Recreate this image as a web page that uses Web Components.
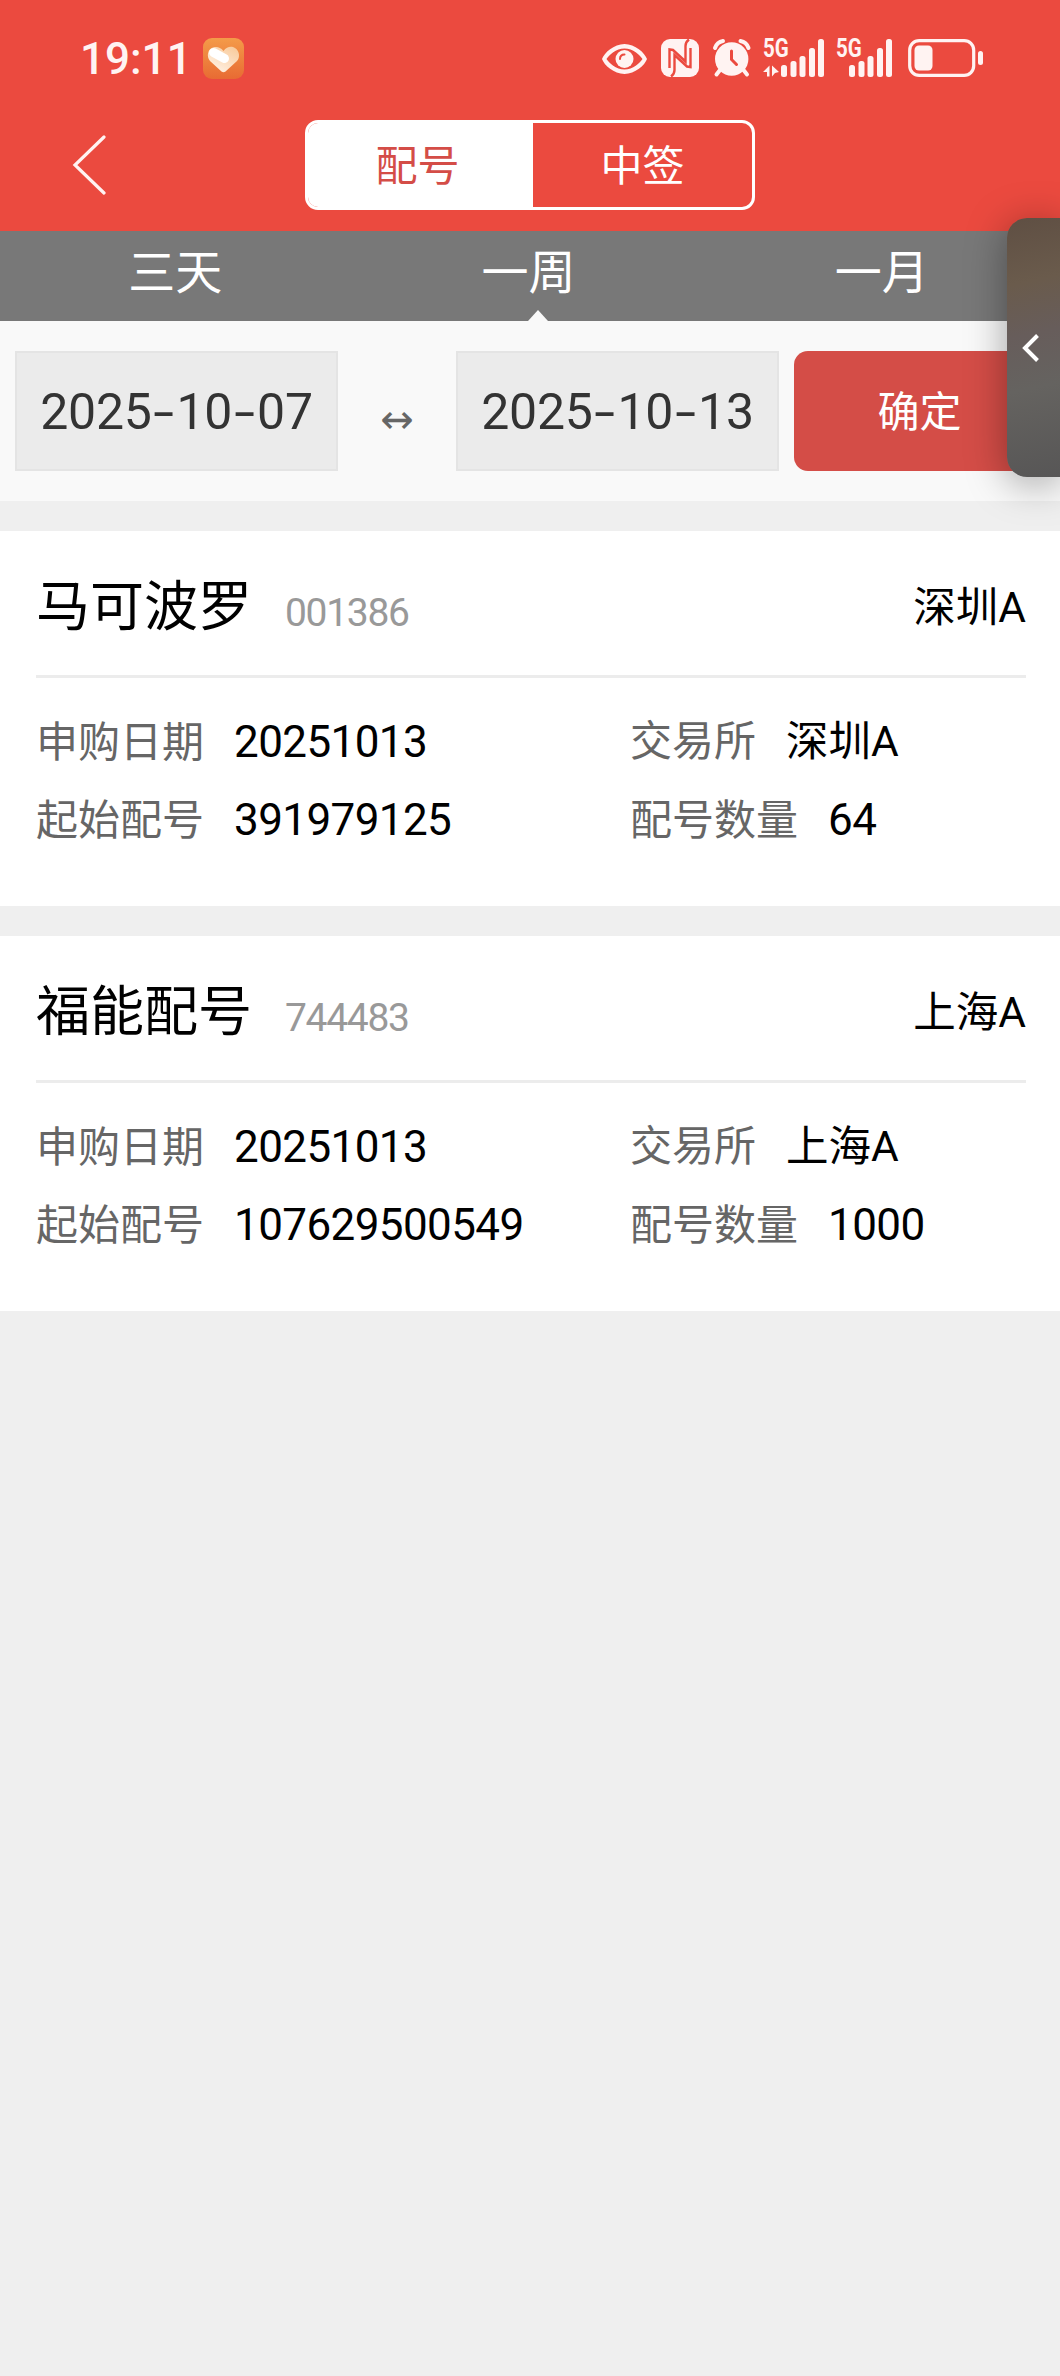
<!DOCTYPE html>
<html lang="zh-CN">
<head>
<meta charset="UTF-8">
<title>配号查询</title>
<style>
  body {
    margin: 0;
    background: #efefef;
    color: #000;
    font-family: Roboto, "Noto Sans CJK SC", sans-serif;
  }
</style>
</head>
<body>
<app-page>
  <status-bar time="19:11"></status-bar>
  <nav-bar>
    <segment-item active>配号</segment-item>
    <segment-item>中签</segment-item>
  </nav-bar>
  <range-tabs>
    <range-tab>三天</range-tab>
    <range-tab active>一周</range-tab>
    <range-tab>一月</range-tab>
  </range-tabs>
  <date-filter>
    <date-box value="2025-10-07"></date-box>
    <date-box slot="end" value="2025-10-13"></date-box>
  </date-filter>
  <stock-card name="马可波罗" code="001386" market="深圳A">
    <info-item label="申购日期" number>20251013</info-item>
    <info-item label="交易所">深圳A</info-item>
    <info-item label="起始配号" number>391979125</info-item>
    <info-item label="配号数量" number>64</info-item>
  </stock-card>
  <stock-card name="福能配号" code="744483" market="上海A">
    <info-item label="申购日期" number>20251013</info-item>
    <info-item label="交易所">上海A</info-item>
    <info-item label="起始配号" number>107629500549</info-item>
    <info-item label="配号数量" number>1000</info-item>
  </stock-card>
  <side-handle slot="overlay"></side-handle>
</app-page>

<script>
  class AppPage extends HTMLElement {
    constructor() {
      super();
      this.attachShadow({ mode: "open" }).innerHTML = `
        <style>
          :host { display: block; position: relative; width: 1060px; min-height: 2376px; overflow: hidden; }
          main { display: flex; flex-direction: column; }
        </style>
        <main><slot></slot></main>
        <slot name="overlay"></slot>
      `;
    }
  }

  class StatusBar extends HTMLElement {
    constructor() {
      super();
      this.attachShadow({ mode: "open" }).innerHTML = `
        <style>
          :host {
            display: flex; align-items: center; box-sizing: border-box; height: 99px;
            padding: 17px 77px 0 80px; background: #eb4a3f; color: #fff3f2;
          }
          .time { width: 123px; padding-top: 2px; font-size: 44px; font-weight: 500; line-height: 50px; white-space: nowrap; }
          .icons { display: flex; align-items: center; margin-left: auto; }
          svg { display: block; overflow: visible; }
          .icons svg { fill: currentColor; }
          .signal { position: relative; margin-right: 11px; }
          /* network type sits over the low bars */
          .signal span {
            position: absolute; left: 0; top: -5px; font-size: 25px; font-weight: 700; line-height: 30px;
            transform: scaleX(.82); transform-origin: 0 0;
          }
        </style>
        <span class="time">${this.getAttribute("time")}</span>
        <svg width="41" height="41" viewBox="0 0 41 41">
          <defs>
            <linearGradient id="tile" x2="0" y2="1"><stop stop-color="#f49b49"/><stop offset="1" stop-color="#e86b33"/></linearGradient>
            <linearGradient id="heart" x1="1" x2=".3" y2="1"><stop stop-color="#f8c896"/><stop offset="1" stop-color="#fff0e2"/></linearGradient>
          </defs>
          <rect width="41" height="41" rx="9" fill="url(#tile)"/>
          <path d="M20.500 13C24 8 29 8 32 10C37 13 37 20 34 23L22.500 33.500Q20.500 35 18.500 33.500L7 23C3 18 5 11 10 9.500C14 8.500 17 9 20.500 13Z" fill="url(#heart)"/>
          <path d="M10.500 14.500L21.500 20.500" stroke="#fff" stroke-width="9" stroke-linecap="round"/>
        </svg>
        <div class="icons">
          <svg width="45" height="37" viewBox="0 0 45 37" style="margin-right:14px">
            <path fill-rule="evenodd" d="M0 19C2 13 12 4 22.500 4S43 13 45 19C43 25 33 34 22.500 34S2 25 0 19ZM4.500 19C7 23 14 29.500 22.500 29.500S38 23 40.500 19C38 15 31 8.500 22.500 8.500S7 15 4.500 19Z"/>
            <circle cx="22.500" cy="19" r="9"/>
            <path d="M18 19Q18 14.500 22.500 14.500" fill="none" stroke="#eb4a3f" stroke-width="2" stroke-linecap="round"/>
          </svg>
          <svg width="38" height="38" viewBox="0 0 38 38" style="margin-right:14px">
            <rect width="38" height="38" rx="9"/>
            <path d="M8.500 29V10.500L12 11L24.500 22.500V7Q24.500 3 28 .5M29.500 9V28L26 27.500L13.500 16V31Q13.500 35 10 37.500" fill="none" stroke="#eb4a3f" stroke-width="2.400"/>
          </svg>
          <svg width="38" height="38" viewBox="0 0 38 38" style="margin-right:12px">
            <circle cx="18.700" cy="20" r="16.700"/>
            <path d="M2 9Q4 3 10 2M27.500 2Q33.500 3 35.500 9M7 31L3.500 35.500M30.500 31L34 35.500" fill="none" stroke="currentColor" stroke-width="4" stroke-linecap="round"/>
            <path d="M18.500 12V20.500L23.500 25.500" fill="none" stroke="#eb4a3f" stroke-width="3" stroke-linecap="round"/>
          </svg>
          <div class="signal">
            <span>5G</span>
            <svg width="62" height="38" viewBox="0 0 62 38">
              <path d="M0 33L6.500 26.500V37.500H4V33ZM9 26.500L16 33L12 34L9 37.500Z"/>
              <rect x="18" y="26" width="6" height="12" rx="2.500"/>
              <rect x="27.500" y="22" width="6" height="16" rx="2.500"/>
              <rect x="36.500" y="17" width="6" height="21" rx="2.500"/>
              <rect x="46" y="9" width="6" height="29" rx="2.500"/>
              <rect x="55" y="0" width="6" height="38" rx="2.500"/>
            </svg>
          </div>
          <div class="signal" style="margin-right:15px">
            <span>5G</span>
            <svg width="57" height="38" viewBox="0 0 57 38">
              <rect x="13" y="26" width="6" height="12" rx="2.500"/>
              <rect x="22.500" y="22" width="6" height="16" rx="2.500"/>
              <rect x="31.500" y="17" width="6" height="21" rx="2.500"/>
              <rect x="41" y="9" width="6" height="29" rx="2.500"/>
              <rect x="50" y="0" width="6" height="38" rx="2.500"/>
            </svg>
          </div>
          <svg width="75" height="38" viewBox="0 0 75 38">
            <rect x="1.700" y="1.700" width="64" height="34.600" rx="9.500" fill="none" stroke="currentColor" stroke-width="3.200"/>
            <rect x="6.500" y="6.500" width="18" height="25" rx="4.500"/>
            <rect x="70" y="12" width="5" height="14" rx="2.500"/>
          </svg>
        </div>
      `;
    }
  }

  class NavBar extends HTMLElement {
    constructor() {
      super();
      this.attachShadow({ mode: "open" }).innerHTML = `
        <style>
          :host { display: grid; grid-template-columns: 305px 450px 305px; align-items: center; height: 132px; background: #eb4a3f; }
          .back { display: block; margin-left: 72px; }
          .segment {
            display: grid; grid-template-columns: 225px 1fr; box-sizing: border-box; height: 90px;
            border: 3px solid #fff; border-radius: 13px; overflow: hidden;
          }
        </style>
        <svg class="back" width="34" height="60" viewBox="0 0 34 60">
          <path d="M32 2L3 30L32 58" fill="none" stroke="#fff3f2" stroke-width="3.200" stroke-linecap="round"/>
        </svg>
        <div class="segment"><slot></slot></div>
      `;
    }
  }

  class SegmentItem extends HTMLElement {
    constructor() {
      super();
      this.attachShadow({ mode: "open" }).innerHTML = `
        <style>
          :host { display: flex; align-items: center; justify-content: center; padding-top: 3px; color: #fff; font-size: 42px; line-height: 60px; }
          :host([active]) { padding-right: 6px; background: #fff; color: #d44d47; }
        </style>
        <slot></slot>
      `;
    }
  }

  class RangeTabs extends HTMLElement {
    constructor() {
      super();
      this.attachShadow({ mode: "open" }).innerHTML = `
        <style>
          :host { display: grid; grid-template-columns: repeat(3, 1fr); height: 90px; background: #787878; }
        </style>
        <slot></slot>
      `;
    }
  }

  class RangeTab extends HTMLElement {
    constructor() {
      super();
      this.attachShadow({ mode: "open" }).innerHTML = `
        <style>
          :host { display: block; position: relative; padding-right: 3px; color: #fff; font-size: 47px; line-height: 83px; text-align: center; }
          :host([active])::after {
            content: ""; position: absolute; left: 175px; bottom: 0;
            border: 10px solid transparent; border-top: 0; border-bottom: 11px solid #f9f9f9;
          }
        </style>
        <slot></slot>
      `;
    }
  }

  class DateFilter extends HTMLElement {
    constructor() {
      super();
      this.attachShadow({ mode: "open" }).innerHTML = `
        <style>
          :host { display: flex; box-sizing: border-box; height: 180px; padding: 30px 15px; background: #f9f9f9; }
          .arrow { width: 118px; padding-top: 8px; box-sizing: border-box; color: #666; font: 40px/120px "DejaVu Sans", sans-serif; text-align: center; }
          button {
            flex: 1; margin: 0 0 0 15px; padding: 3px 0 0; border: 0; border-radius: 14px;
            background: #d44d47; color: #fff; font: 42px/60px Roboto, "Noto Sans CJK SC", sans-serif;
          }
        </style>
        <slot></slot>
        <span class="arrow">↔</span>
        <slot name="end"></slot>
        <button>确定</button>
      `;
    }
  }

  class DateBox extends HTMLElement {
    constructor() {
      super();
      const text = this.getAttribute("value").replace(/-/g, "<i>-</i>");
      this.attachShadow({ mode: "open" }).innerHTML = `
        <style>
          :host {
            display: block; box-sizing: border-box; width: 323px; height: 120px; border: 2px solid #e4e4e4;
            background: #ebebeb; color: #333; font-size: 50px; line-height: 118px; text-align: center;
          }
          span { letter-spacing: -.3px; white-space: nowrap; }
          /* wide dash between the date parts */
          i { display: inline-block; width: 25px; font-style: normal; transform: scaleX(1.5); }
        </style>
        <span>${text}</span>
      `;
    }
  }

  class StockCard extends HTMLElement {
    constructor() {
      super();
      this.attachShadow({ mode: "open" }).innerHTML = `
        <style>
          :host { display: block; box-sizing: border-box; height: 375px; margin-top: 30px; padding: 0 34px 0 36px; background: #fff; }
          header { display: flex; align-items: baseline; box-sizing: border-box; height: 147px; padding-top: 37px; border-bottom: 3px solid #ececec; }
          h2 { margin: 0; font-size: 54px; font-weight: 400; line-height: 80px; }
          .code { margin-left: 33px; color: #999; font-size: 39px; letter-spacing: -1.3px; }
          .market { margin-left: auto; align-self: flex-start; font-size: 42.500px; line-height: 80px; }
          .list { display: grid; grid-template-columns: 594px 1fr; grid-auto-rows: 78px; padding-top: 25px; }
        </style>
        <header>
          <h2>${this.getAttribute("name")}</h2>
          <span class="code">${this.getAttribute("code")}</span>
          <span class="market">${this.getAttribute("market")}</span>
        </header>
        <div class="list"><slot></slot></div>
      `;
    }
  }

  class InfoItem extends HTMLElement {
    constructor() {
      super();
      this.attachShadow({ mode: "open" }).innerHTML = `
        <style>
          :host { display: flex; align-items: baseline; gap: 30px; font-size: 42px; line-height: 78px; white-space: nowrap; }
          label { color: #666; }
          span { font-size: 42.500px; }
          :host([number]) span { font-size: 44px; letter-spacing: -.6px; }
        </style>
        <label>${this.getAttribute("label")}</label>
        <span><slot></slot></span>
      `;
    }
  }

  class SideHandle extends HTMLElement {
    constructor() {
      super();
      this.attachShadow({ mode: "open" }).innerHTML = `
        <style>
          :host {
            display: flex; align-items: center; box-sizing: border-box; position: absolute; top: 218px; right: 0;
            width: 53px; height: 259px; padding-left: 14px; border-radius: 20px 0 0 20px;
            background: linear-gradient(168deg, #5f4f43, #6a5b4c 25%, #675d5b 45%, #656360 65%, #575656);
            box-shadow: 0 6px 40px rgba(0, 0, 0, .36);
          }
        </style>
        <svg width="20" height="30" viewBox="0 0 20 30">
          <path d="M16.500 2.500L4 15L16.500 27.500" fill="none" stroke="#fff" stroke-width="4"/>
        </svg>
      `;
    }
  }

  customElements.define("app-page", AppPage);
  customElements.define("status-bar", StatusBar);
  customElements.define("nav-bar", NavBar);
  customElements.define("segment-item", SegmentItem);
  customElements.define("range-tabs", RangeTabs);
  customElements.define("range-tab", RangeTab);
  customElements.define("date-filter", DateFilter);
  customElements.define("date-box", DateBox);
  customElements.define("stock-card", StockCard);
  customElements.define("info-item", InfoItem);
  customElements.define("side-handle", SideHandle);
</script>
</body>
</html>
